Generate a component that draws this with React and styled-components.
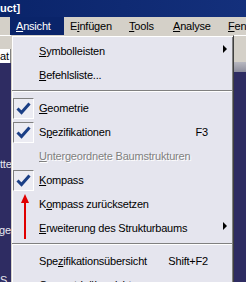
import React from "react";
import styled, { createGlobalStyle } from "styled-components";

const FONT = `"Liberation Sans", Arial, sans-serif`;

const GlobalStyle = createGlobalStyle`
  html, body { margin: 0; padding: 0; }
  body { width: 246px; height: 282px; overflow: hidden; background: #d4d0c8; }
`;

const Screen = styled.div`
  position: relative;
  width: 246px;
  height: 282px;
  overflow: hidden;
  display: flex;
  flex-direction: column;
  font-family: ${FONT};
  font-size: 11px;
  letter-spacing: -0.2px;
`;

const TitleBar = styled.div`
  flex: none;
  height: 17px;
  background: linear-gradient(90deg, #0a246a, #14307c);
  color: #fff;
  font-weight: bold;
  line-height: 17px;
  letter-spacing: 0;
`;

const MenuBar = styled.div`
  flex: none;
  height: 18px;
  display: flex;
  padding-left: 10px;
  background: #d4d0c8;
`;

const MenuTitle = styled.div`
  flex: none;
  width: ${p => p.$w}px;
  box-sizing: border-box;
  padding-left: 6px;
  line-height: 18px;
  white-space: nowrap;
  color: ${p => (p.$open ? "#fff" : "#000")};
  background: ${p => (p.$open ? "#0a246a" : "transparent")};
`;

const Key = styled.span`
  text-decoration: underline;
  text-underline-offset: 1px;
`;

const Body = styled.div`
  flex: 1;
  display: grid;
  grid-template-columns: 11px 1fr;
  min-height: 0;
`;

const Pane = styled.div`
  display: flex;
  flex-direction: column;
  min-height: 0;
  overflow: hidden;
`;

const Toolbar = styled.div`
  flex: none;
  height: ${p => p.$h}px;
  box-sizing: border-box;
  background: #d4d0c8;
  border-top: 1px solid #fff;
  padding-top: ${p => p.$pad || 0}px;
`;

const Combo = styled.div`
  height: 14px;
  display: flex;
  background: #fff;
  line-height: 14px;
  overflow: hidden;
  white-space: nowrap;
`;

const ComboDrop = styled.span`
  margin-left: 1px;
  width: 4px;
  background: #d4d0c8;
  border-left: 1px solid #808080;
`;

const Band = styled.div`
  flex: none;
  height: 10px;
  background: linear-gradient(180deg, #b8b8c0, #8c8c9c);
`;

const Viewer = styled.div`
  flex: 1;
  background: #2e2c62;
  color: #e8e8f0;
  white-space: nowrap;
`;

const TreeLabel = styled.div`
  margin-top: ${p => p.$top}px;
  margin-left: ${p => p.$left || 0}px;
  line-height: 12px;
`;

const Dropdown = styled.div`
  position: absolute;
  left: 11px;
  top: 35px;
  width: 223px;
  height: 260px;
  box-sizing: border-box;
  padding-top: 3px;
  background: #e5e5ee;
  border: 1px solid;
  border-color: #d4d0c8 #404040 #404040 #d4d0c8;
  box-shadow: inset 1px 1px #fff, inset -1px -1px #808080;
`;

const Row = styled.div`
  height: 24px;
  display: grid;
  grid-template-columns: 26px 1fr auto 25px;
  align-items: center;
  padding-left: 1px;
  white-space: nowrap;
  color: ${p => (p.$disabled ? "#808080" : "#000")};
  text-shadow: ${p => (p.$disabled ? "1px 1px 0 #fff" : "none")};
`;

const CheckBox = styled.span`
  width: 21px;
  height: 21px;
  box-sizing: border-box;
  border: 1px solid;
  border-color: #808080 #fff #fff #808080;
  background: #ececf3;
  display: flex;
  align-items: center;
  justify-content: center;
`;

const Shortcut = styled.span`
  text-align: right;
`;

const SubArrow = styled.span`
  justify-self: start;
  margin-left: 15px;
  margin-top: -4px;
  width: 0;
  height: 0;
  border-left: 4px solid #000;
  border-top: 4px solid transparent;
  border-bottom: 4px solid transparent;
`;

const Separator = styled.div`
  height: 9px;
  box-sizing: border-box;
  padding: 3px 1px 0 0;
  &::before {
    content: "";
    display: block;
    height: 1px;
    background: #808080;
    border-bottom: 1px solid #fff;
  }
`;

const Pointer = styled.svg`
  position: absolute;
  left: 20px;
  top: 194px;
`;

const menus = [
  { label: "Ansicht", u: 0, w: 54, open: true },
  { label: "Einfügen", u: 1, w: 59 },
  { label: "Tools", u: 0, w: 44 },
  { label: "Analyse", u: 0, w: 55 },
  { label: "Fenster", u: 0, w: 60 },
];

const items = [
  { label: "Symbolleisten", u: 0, sub: true },
  { label: "Befehlsliste...", u: 0 },
  { sep: true },
  { label: "Geometrie", u: 0, checked: true },
  { label: "Spezifikationen", u: 1, checked: true, shortcut: "F3" },
  { label: "Untergeordnete Baumstrukturen", u: 0, disabled: true },
  { label: "Kompass", u: 0, checked: true },
  { label: "Kompass zurücksetzen", u: 1 },
  { label: "Erweiterung des Strukturbaums", u: 0, sub: true },
  { sep: true },
  { label: "Spezifikationsübersicht", u: 3, shortcut: "Shift+F2" },
  { label: "Geometrieübersicht", u: 0 },
];

const Mnemonic = ({ text, u }) => (
  <>
    {text.slice(0, u)}
    <Key>{text[u]}</Key>
    {text.slice(u + 1)}
  </>
);

const Check = () => (
  <svg width="15" height="13" viewBox="0 0 15 13">
    <path d="M1.5 6.5 L5.5 10.5 L13.5 1.5" fill="none" stroke="#1b3f86" strokeWidth="3" />
  </svg>
);

export default function App() {
  return (
    <Screen>
      <GlobalStyle />
      <TitleBar>uct]</TitleBar>
      <MenuBar>
        {menus.map(m => (
          <MenuTitle key={m.label} $w={m.w} $open={m.open}>
            <Mnemonic text={m.label} u={m.u} />
          </MenuTitle>
        ))}
      </MenuBar>
      <Body>
        <Pane>
          <Toolbar $h={28} $pad={13}>
            <Combo>
              at<ComboDrop />
            </Combo>
          </Toolbar>
          <Viewer>
            <TreeLabel $top={95}>tte</TreeLabel>
            <TreeLabel $top={54} $left={-1}>ge</TreeLabel>
            <TreeLabel $top={38}>S</TreeLabel>
          </Viewer>
        </Pane>
        <Pane>
          <Toolbar $h={27} />
          <Band />
          <Viewer />
        </Pane>
      </Body>
      <Dropdown>
        {items.map((it, i) =>
          it.sep ? (
            <Separator key={i} />
          ) : (
            <Row key={i} $disabled={it.disabled}>
              <span>{it.checked && <CheckBox><Check /></CheckBox>}</span>
              <span>
                <Mnemonic text={it.label} u={it.u} />
              </span>
              <Shortcut>{it.shortcut}</Shortcut>
              {it.sub ? <SubArrow /> : <span />}
            </Row>
          )
        )}
      </Dropdown>
      <Pointer width="10" height="46" viewBox="0 0 10 46">
        <polygon points="5,0 1,9 9,9" fill="#e00000" />
        <rect x="4" y="8" width="2" height="37" fill="#e00000" />
      </Pointer>
    </Screen>
  );
}
